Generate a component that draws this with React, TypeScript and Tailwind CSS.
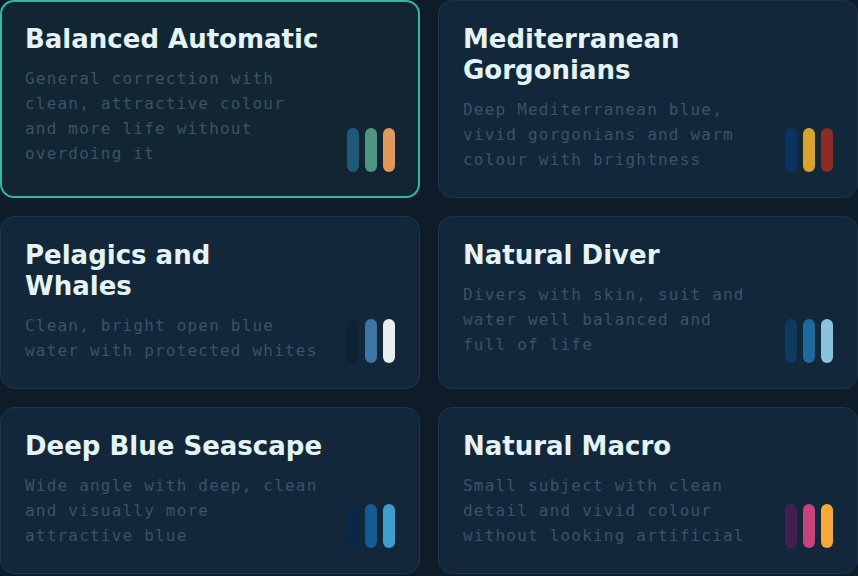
import React from "react";

type Preset = {
  title: string;
  desc: string;
  colors: [string, string, string];
  active?: boolean;
};

const presets: Preset[] = [
  {
    title: "Balanced Automatic",
    desc: "General correction with clean, attractive colour and more life without overdoing it",
    colors: ["#1f5878", "#4f9584", "#e0995a"],
    active: true,
  },
  {
    title: "Mediterranean Gorgonians",
    desc: "Deep Mediterranean blue, vivid gorgonians and warm colour with brightness",
    colors: ["#0c3262", "#d8a42b", "#8b2b23"],
  },
  {
    title: "Pelagics and Whales",
    desc: "Clean, bright open blue water with protected whites",
    colors: ["#0d2232", "#3d76a3", "#e6eeee"],
  },
  {
    title: "Natural Diver",
    desc: "Divers with skin, suit and water well balanced and full of life",
    colors: ["#0e3a62", "#1e6a9c", "#8ac4dc"],
  },
  {
    title: "Deep Blue Seascape",
    desc: "Wide angle with deep, clean and visually more attractive blue",
    colors: ["#0b2648", "#165a93", "#3f9fcb"],
  },
  {
    title: "Natural Macro",
    desc: "Small subject with clean detail and vivid colour without looking artificial",
    colors: ["#45204f", "#c8437b", "#f5a93a"],
  },
];

function Swatches({ colors }: { colors: [string, string, string] }) {
  return (
    <div className="flex shrink-0 gap-1.5">
      {colors.map((c, i) => (
        <span key={i} className="block h-11 w-3 rounded-full" style={{ backgroundColor: c }} />
      ))}
    </div>
  );
}

function PresetCard({ p }: { p: Preset }) {
  return (
    <div
      className={
        p.active
          ? "flex flex-col rounded-[14px] border-2 border-[#2fb8a8] bg-[#112632] px-[23px] pb-[24px] pt-[22px]"
          : "flex flex-col rounded-[14px] border border-[#1b364a] bg-[#12273a] px-[24px] pb-[25px] pt-[23px]"
      }
    >
      <h3
        className="max-w-[300px] text-[26px] font-bold leading-[31px] text-[#e4f3f5]"
        style={{ fontFamily: '"DejaVu Sans", sans-serif' }}
      >
        {p.title}
      </h3>
      <div className="mt-[11px] flex flex-1 items-end justify-between">
        <p
          className="w-[296px] self-start text-[16px] leading-[25px] tracking-[1.2px] text-[#3b5366]"
          style={{ fontFamily: '"DejaVu Sans Mono", monospace' }}
        >
          {p.desc}
        </p>
        <Swatches colors={p.colors} />
      </div>
    </div>
  );
}

export default function App() {
  return (
    <div className="min-h-[576px] w-[858px] overflow-hidden bg-[#0e1b29]">
      <div className="grid grid-cols-2 gap-x-[18px] gap-y-[18px]">
        {presets.map((p) => (
          <PresetCard key={p.title} p={p} />
        ))}
      </div>
    </div>
  );
}
